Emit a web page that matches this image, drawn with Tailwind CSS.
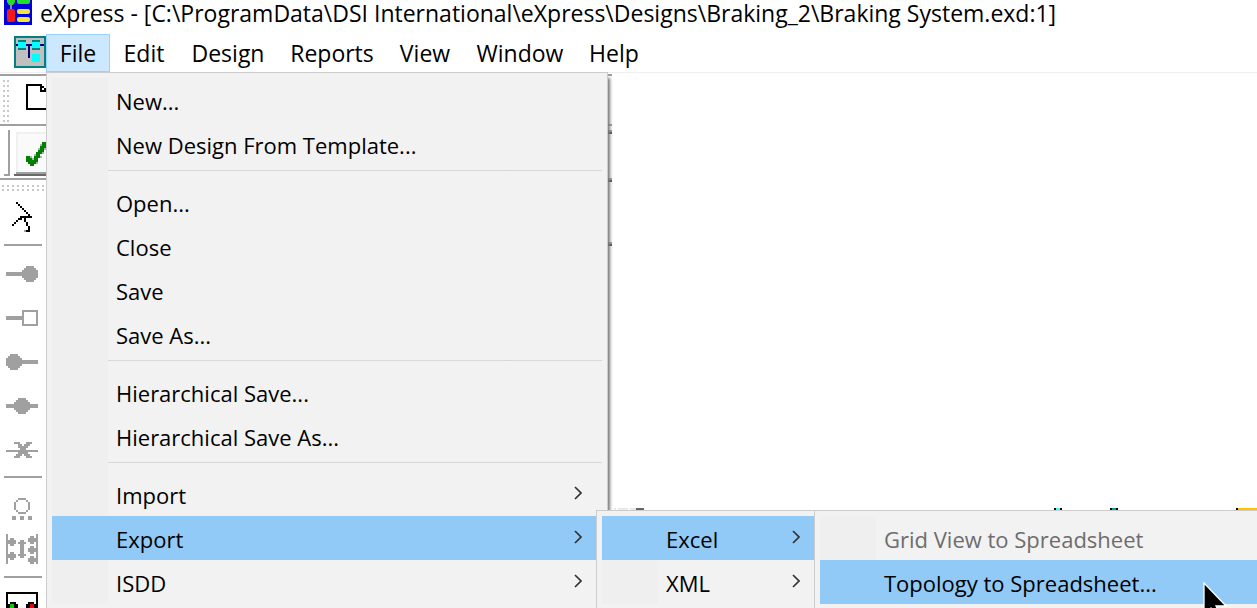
<!DOCTYPE html>
<html lang="en">
<head>
<meta charset="utf-8">
<title>eXpress</title>
<script src="https://cdn.jsdelivr.net/npm/@tailwindcss/browser@4"></script>
</head>
<body class="relative flex h-screen flex-col overflow-hidden bg-white font-['Open_Sans','Noto_Sans',sans-serif] text-[23px] text-black">

<svg class="hidden">
  <symbol id="dot" viewBox="0 0 8 8"><path d="M2 0h4v1h1v1h1v4h-1v1h-1v1h-4v-1h-1v-1h-1v-4h1v-1h1z"/></symbol>
  <symbol id="chevron" viewBox="0 0 8 14"><path d="M1 1l6 6-6 6" fill="none" stroke="#333" stroke-width="1.7"/></symbol>
</svg>

<header class="flex h-[34px] shrink-0 items-start gap-2 pl-1">
  <svg class="h-[25px] w-7 shrink-0" viewBox="0 0 28 25">
    <rect width="28" height="25" fill="#0000d8"/>
    <path d="M3 0h8v2l-2 3h-4l-2-3z" fill="#22e022"/>
    <rect x="13" y="-2" width="13" height="6" rx="2" fill="#22e022"/>
    <path d="M6 4h2v5h-2z" fill="#8a8ab0"/>
    <rect x="3" y="9" width="8" height="13" rx="2" fill="#f81818"/>
    <rect x="13" y="9" width="13" height="5" rx="2" fill="#f0e640"/>
    <rect x="13" y="17" width="13" height="5" rx="2" fill="#f0e640"/>
  </svg>
  <h1 class="whitespace-nowrap leading-[26px]">eXpress - [C:\ProgramData\DSI International\eXpress\Designs\Braking_2\Braking System.exd:1]</h1>
</header>

<nav class="flex h-[38px] shrink-0 items-stretch pl-3.5 leading-[36px]">
  <svg class="mt-0.5 size-8 shrink-0" viewBox="0 0 32 32" shape-rendering="crispEdges">
    <rect width="32" height="32" fill="#008080"/><rect x="2" y="2" width="28" height="28" fill="#c0c0c0"/>
    <path d="M2 8h28v2h-14v12h-2v-12h-12z" fill="#000080"/>
    <path d="M4 4h8v2h-8zM18 4h8v2h-8zM4 12h8v2h-8zM18 12h8v2h-8z" fill="#008080"/>
    <path d="M4 6h8v6h-8zM18 6h8v6h-8zM18 18h8v8h-8z" fill="#00ffff"/>
  </svg>
  <button class="w-16 border border-[#99d1ff] bg-[#cce8ff]">File</button>
  <button class="w-[68px]">Edit</button>
  <button class="w-[100px]">Design</button>
  <button class="w-[108px]">Reports</button>
  <button class="w-[78px]">View</button>
  <button class="w-[112px]">Window</button>
  <button class="w-[76px]">Help</button>
</nav>

<main class="relative min-h-0 flex-1 border-t border-[#f0f0f0]">
  <div class="w-[612px] pt-px">
    <div class="flex h-[52px] items-start border-y-2 border-[#a0a0a0]">
      <svg class="h-12 w-[46px]" viewBox="0 0 46 48" shape-rendering="crispEdges">
        <path d="M4 4v44M8 4v44" stroke="#c8c8c8" stroke-width="2" stroke-dasharray="2 3"/>
        <path d="M26 8h16v2h2v2h2v4h-6v-6H28v22h18v2H26zM42 12v2h2v-2z" fill-rule="evenodd"/>
      </svg>
    </div>
    <div class="flex h-[54px] items-start border-b-2 border-[#a0a0a0] pt-1">
      <svg class="h-12 w-[46px]" viewBox="0 0 46 48" shape-rendering="crispEdges">
        <path d="M8 0h2v46H4v-2h4z" fill="#a0a0a0"/>
        <path d="M16 2h30v40H16z" fill="#f0f0f0"/><path d="M18 4h28v38H18z" fill="#fafafa"/>
        <path d="M16 42h30v2H16z" fill="#a0a0a0"/><path d="M14 44h32v2H14z" fill="#696969"/>
        <path d="M40 14h2v2h-2zM38 18h2v2h-2zM34 24h2v2h-2zM32 28h2v2h-2zM44 18h2v2h-2zM42 22h2v2h-2zM40 26h2v2h-2zM36 32h2v2h-2zM30 26h2v2h-2z" fill="#b0b0b0"/>
        <path d="M42 12h4v4h-4zM40 16h6v2h-6zM40 18h4v2h-4zM38 20h6v2h-6zM36 22h6v2h-6zM36 24h4v2h-4zM26 26h4v2h-4zM34 26h6v2h-6zM26 28h6v2h-6zM34 28h4v2h-4zM26 30h12v2H26zM28 32h8v2h-8zM30 34h4v2h-4z" fill="#008000"/>
      </svg>
    </div>
  </div>

  <aside class="flex w-[46px] flex-col text-[#a0a0a0]">
    <svg class="h-3 w-[46px]" viewBox="0 0 46 12" shape-rendering="crispEdges"><path d="M2 6h44M2 10h44" stroke="#c8c8c8" stroke-width="2" stroke-dasharray="2 3"/></svg>
    <button aria-label="Select">
      <svg class="h-[52px] w-[46px]" viewBox="0 0 23 26" shape-rendering="crispEdges" fill="#000">
        <path d="M8 5h1v1H8zM9 6h1v1H9zM10 7h1v1h-1zM11 8h1v1h-1zM12 9h1v1h-1zM13 10h1v1h-1zM14 11h1v1h-1zM10 12h6v1h-6zM9 13h2v1H9zM8 14h1v1H8zM7 15h1v1H7zM6 16h1v1H6zM12 13h1v2h-1zM13 15h1v2h-1zM14 17h1v2h-1zM13 19h2v1h-2z"/>
        <path d="M12 19h1v1h-1z" fill="#a0a0a0"/>
      </svg>
    </button>
    <hr class="mx-1 mb-1.5 border-t-2 border-[#a0a0a0]">
    <button aria-label="Output port"><svg class="h-11 w-[46px]" viewBox="0 0 23 22" fill="currentColor" shape-rendering="crispEdges"><path d="M3 10h9v2H3z"/><use href="#dot" x="11" y="7" width="8" height="8"/></svg></button>
    <button aria-label="Box port"><svg class="h-11 w-[46px]" viewBox="0 0 23 22" fill="currentColor" shape-rendering="crispEdges"><path d="M3 10h8v2H3zM11 7h8v8h-8zM12 8v6h6v-6z" fill-rule="evenodd"/></svg></button>
    <button aria-label="Input port"><svg class="h-11 w-[46px]" viewBox="0 0 23 22" fill="currentColor" shape-rendering="crispEdges"><path d="M10 10h9v2h-9z"/><use href="#dot" x="3" y="7" width="8" height="8"/></svg></button>
    <button aria-label="Junction"><svg class="h-11 w-[46px]" viewBox="0 0 23 22" fill="currentColor" shape-rendering="crispEdges"><path d="M3 10h16v2H3z"/><use href="#dot" x="7" y="7" width="8" height="8"/></svg></button>
    <button aria-label="Disconnect"><svg class="h-11 w-[46px]" viewBox="0 0 23 22" fill="currentColor" shape-rendering="crispEdges"><path d="M3 11h16v1H3zM7 7h3v1H7zM13 7h3v1h-3zM9 8h2v1H9zM12 8h3v1h-3zM9 9h5v1H9zM10 10h3v1h-3zM9 12h5v1H9zM8 13h3v1H8zM12 13h3v1h-3zM7 14h3v1H7zM13 14h3v1h-3z"/></svg></button>
    <hr class="mx-1 mt-1 mb-1.5 border-t-2 border-[#a0a0a0]">
    <button aria-label="Group"><svg class="h-11 w-[46px]" viewBox="0 0 23 22" fill="currentColor" shape-rendering="crispEdges"><path d="M9 7h4v1H9zM8 8h1v1H8zM13 8h1v1h-1zM7 9h1v4H7zM14 9h1v4h-1zM8 13h1v1H8zM13 13h1v1h-1zM9 14h4v1H9zM6 16h2v2H6zM10 16h2v2h-2zM14 16h2v2h-2z"/></svg></button>
    <button aria-label="Bus"><svg class="h-11 w-[46px]" viewBox="0 0 23 22" fill="currentColor" shape-rendering="crispEdges"><path d="M3 3h1v15H3zM18 3h1v15h-1zM4 6h1v-1h2v1h1v2H7v1H5V8H4zM4 13h1v-1h2v1h1v2H7v1H5v-1H4zM10 6h2v1h1v1h-1v5h1v1h-1v1h-2v-1H9v-1h1V8H9V7h1zM14 5h1V4h2v1h1v2h-1v1h-2V7h-1zM14 10h1V9h2v1h1v2h-1v1h-2v-1h-1zM14 15h1v-1h2v1h1v2h-1v1h-2v-1h-1z"/></svg></button>
    <hr class="mx-1 mt-1 mb-1.5 border-t-2 border-[#a0a0a0]">
    <button aria-label="Test"><svg class="h-11 w-[46px]" viewBox="0 0 23 22" shape-rendering="crispEdges"><path d="M3 4h16v16H3z"/><path d="M4 5h14v14H4z" fill="#fff"/><path d="M5 9h3v1h1v5H4v-5h1zM14 9h3v1h1v5h-5v-5h1z"/><path d="M5 10h2v4H5z" fill="#00d000"/><path d="M15 10h2v4h-2z" fill="#f00000"/></svg></button>
  </aside>
</main>

<!-- Diagram parts showing above the cascading menus -->
<svg class="absolute top-[508px] left-[614px] h-0.5 w-[643px]" viewBox="0 0 643 2" shape-rendering="crispEdges">
  <path d="M0 0h2v2H0zM4 0h10v2H4zM16 0h6v2h-6z" fill="#e8e8e8"/><path d="M22 0h8v2h-8z" fill="#666"/>
  <path d="M440 0h8v2h-8zM496 0h8v2h-8zM622 0h2v2h-2z"/><path d="M442 0h4v2h-4z" fill="#40ffff"/><path d="M498 0h4v2h-4z" fill="#00a0a0"/><path d="M624 0h19v2h-19z" fill="#ffc000"/>
</svg>

<!-- Toolbar ends beside the File menu -->
<svg class="absolute top-[130px] left-[608px] h-[116px] w-1" viewBox="0 0 4 116" shape-rendering="crispEdges">
  <path d="M0 0h4v2H0zM0 48h4v2H0zM0 112h4v2H0z" fill="#a0a0a0"/><path d="M0 2h4v2H0zM0 50h4v2H0zM0 114h4v2H0z" fill="#555"/>
</svg>

<!-- File menu -->
<div role="menu" class="absolute top-[72px] left-[46px] flex h-[560px] w-[562px] flex-col border border-[#cccccc] bg-[#f2f2f2] p-[5px] text-[22px] leading-[42px] shadow-[4px_4px_3px_-2px_#777777]">
  <div class="flex flex-col bg-linear-to-r from-[#efefef] from-[56px] to-[#f2f2f2] to-[56px]">
    <button role="menuitem" class="h-11 pt-0.5 pl-16 text-left">New...</button>
    <button role="menuitem" class="h-11 pt-0.5 pl-16 text-left">New Design From Template...</button>
    <hr class="mt-1 mb-[9px] ml-14 border-[#d7d7d7]">
    <button role="menuitem" class="h-11 pt-0.5 pl-16 text-left">Open...</button>
    <button role="menuitem" class="h-11 pt-0.5 pl-16 text-left">Close</button>
    <button role="menuitem" class="h-11 pt-0.5 pl-16 text-left">Save</button>
    <button role="menuitem" class="h-11 pt-0.5 pl-16 text-left">Save As...</button>
    <hr class="mt-1 mb-[9px] ml-14 border-[#d7d7d7]">
    <button role="menuitem" class="h-11 pt-0.5 pl-16 text-left">Hierarchical Save...</button>
    <button role="menuitem" class="h-11 pt-0.5 pl-16 text-left">Hierarchical Save As...</button>
    <hr class="mt-1 mb-[9px] ml-14 border-[#d7d7d7]">
    <button role="menuitem" class="flex h-11 justify-between pt-0.5 pr-5 pl-16">Import<svg class="mt-3 h-3.5 w-2"><use href="#chevron"/></svg></button>
    <button role="menuitem" class="flex h-11 justify-between bg-[#91c9f7] pt-0.5 pr-5 pl-16">Export<svg class="mt-3 h-3.5 w-2"><use href="#chevron"/></svg></button>
    <button role="menuitem" class="flex h-11 justify-between pt-0.5 pr-5 pl-16">ISDD<svg class="mt-3 h-3.5 w-2"><use href="#chevron"/></svg></button>
  </div>
</div>

<!-- Export submenu -->
<div role="menu" class="absolute top-[510px] left-[596px] h-[120px] w-[219px] border border-[#cccccc] bg-[#f2f2f2] py-[5px] pl-[5px] text-[22px] leading-[42px]">
  <div class="flex flex-col bg-linear-to-r from-[#efefef] from-[56px] to-[#f2f2f2] to-[56px]">
    <button role="menuitem" class="flex h-11 justify-between bg-[#91c9f7] pt-0.5 pr-3.5 pl-16">Excel<svg class="mt-3 h-3.5 w-2"><use href="#chevron"/></svg></button>
    <button role="menuitem" class="flex h-11 justify-between pt-0.5 pr-3.5 pl-16">XML<svg class="mt-3 h-3.5 w-2"><use href="#chevron"/></svg></button>
  </div>
</div>

<!-- Excel submenu -->
<div role="menu" class="absolute top-[510px] right-0 left-[814px] h-[120px] border border-r-0 border-[#cccccc] bg-[#f2f2f2] py-[5px] pl-[5px] text-[22px] leading-[42px]">
  <div class="flex flex-col bg-linear-to-r from-[#efefef] from-[56px] to-[#f2f2f2] to-[56px]">
    <button role="menuitem" disabled class="h-11 pt-0.5 pl-16 text-left text-[#6d6d6d]">Grid View to Spreadsheet</button>
    <button role="menuitem" class="h-11 bg-[#91c9f7] pt-0.5 pl-16 text-left">Topology to Spreadsheet...</button>
  </div>
</div>

<!-- Mouse pointer -->
<svg class="absolute top-[582px] left-[1203px] h-[38px] w-6" viewBox="0 0 24 38"><path d="M1 1v32l7-7 5 11 5-2-5-11h10z" fill="#000" stroke="#fff" stroke-width="1.3"/></svg>
</body>
</html>
